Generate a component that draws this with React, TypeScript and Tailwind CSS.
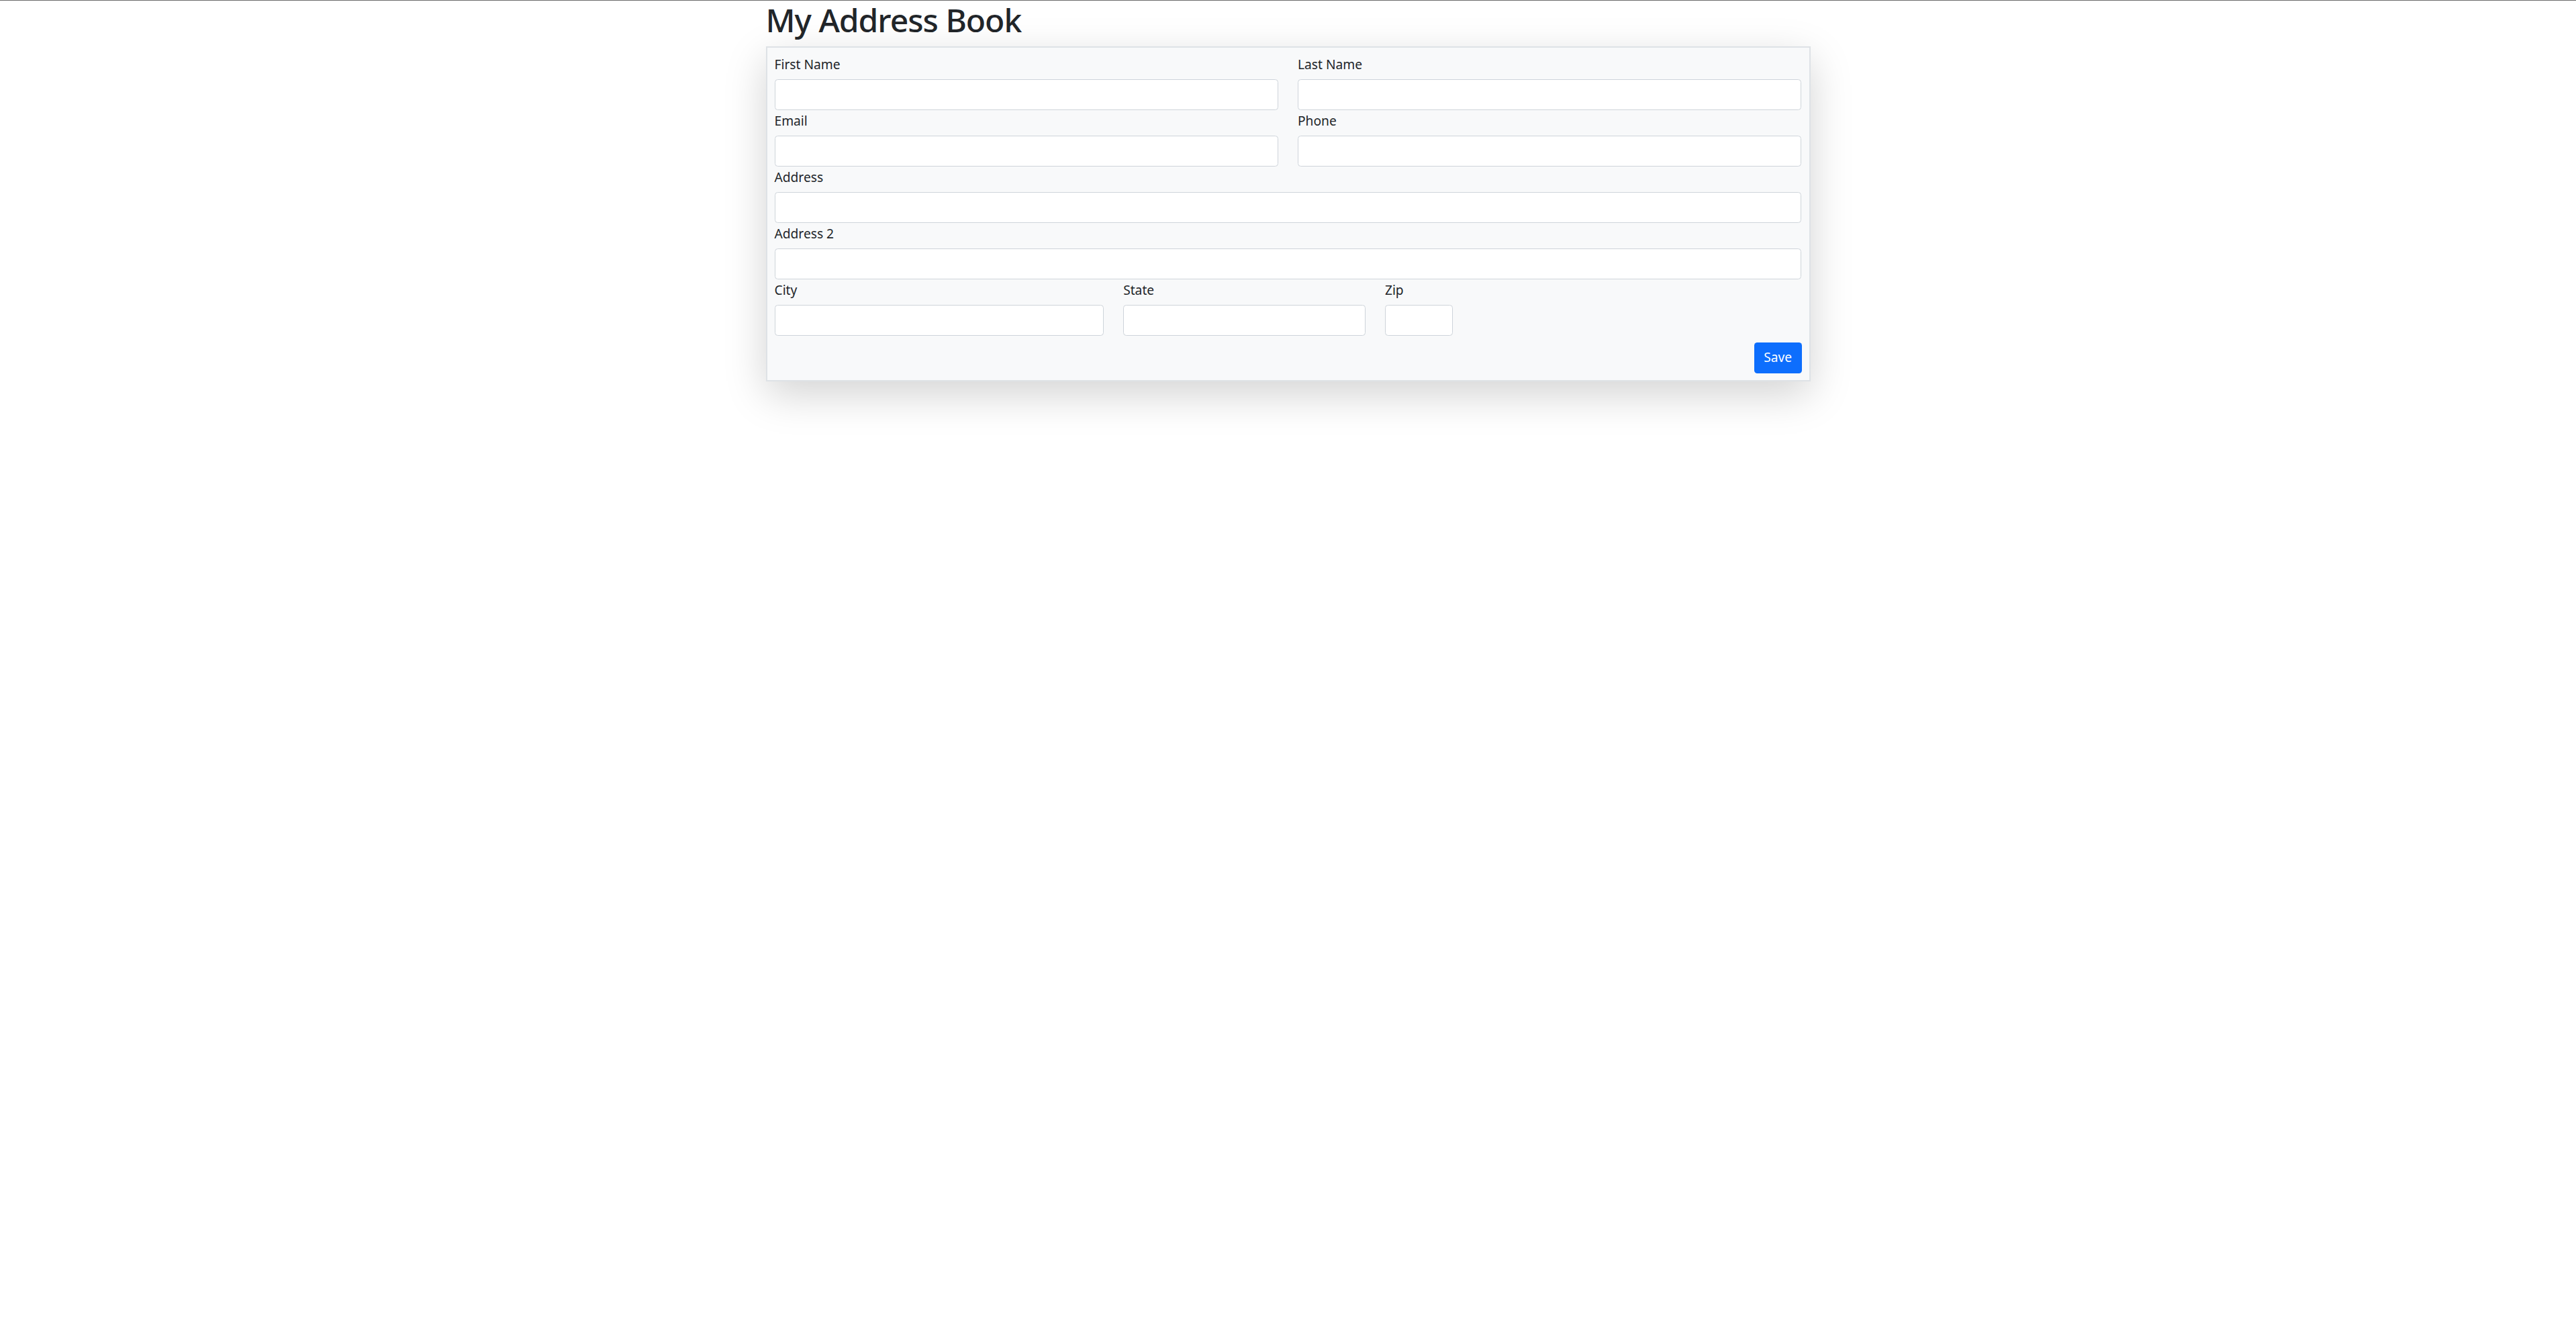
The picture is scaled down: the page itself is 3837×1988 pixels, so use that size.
import React from 'react'

const fieldLabel = 'block text-[19.2px] leading-[28.8px] pt-[2px] mb-[7.6px] text-[#212529]'
const fieldInput =
  'block w-full h-[45.6px] bg-white border border-[#ced4da] rounded-[4.5px] px-[14px] text-[19.2px] text-[#212529] outline-none'

const Field: React.FC<{ label: string; span: string; id: string }> = ({ label, span, id }) => (
  <div className={span}>
    <label htmlFor={id} className={fieldLabel}>
      {label}
    </label>
    <input id={id} type="text" className={fieldInput} />
  </div>
)

const App: React.FC = () => {
  return (
    <div
      className="min-h-screen bg-white border-t border-[#6b6b6b]"
      style={{ fontFamily: '"Segoe UI", "Noto Sans", "Open Sans", sans-serif' }}
    >
      <div className="mx-auto w-[1556px]">
        <h1 className="text-[48px] leading-[57.6px] font-medium tracking-[-1px] text-[#212529] mb-[10px]">
          My Address Book
        </h1>
        <form
          className="border-2 border-[#dee2e6] bg-[#f8f9fa] shadow-[0_19px_58px_rgba(0,0,0,0.175)] px-[11px] pt-[9px] pb-[10px]"
          onSubmit={(e) => e.preventDefault()}
        >
          <div className="grid grid-cols-12 gap-x-[29px]">
            <Field id="firstName" label="First Name" span="col-span-6" />
            <Field id="lastName" label="Last Name" span="col-span-6" />
            <Field id="email" label="Email" span="col-span-6" />
            <Field id="phone" label="Phone" span="col-span-6" />
            <Field id="address" label="Address" span="col-span-12" />
            <Field id="address2" label="Address 2" span="col-span-12" />
            <Field id="city" label="City" span="col-span-4" />
            <Field id="state" label="State" span="col-span-3" />
            <Field id="zip" label="Zip" span="col-span-1" />
          </div>
          <div className="flex justify-end mt-[10px]">
            <button
              type="submit"
              className="h-[46px] px-[14.4px] rounded-[4.5px] bg-[#0d6efd] text-white text-[19.2px] leading-[28.8px]"
            >
              Save
            </button>
          </div>
        </form>
      </div>
    </div>
  )
}

export default App
